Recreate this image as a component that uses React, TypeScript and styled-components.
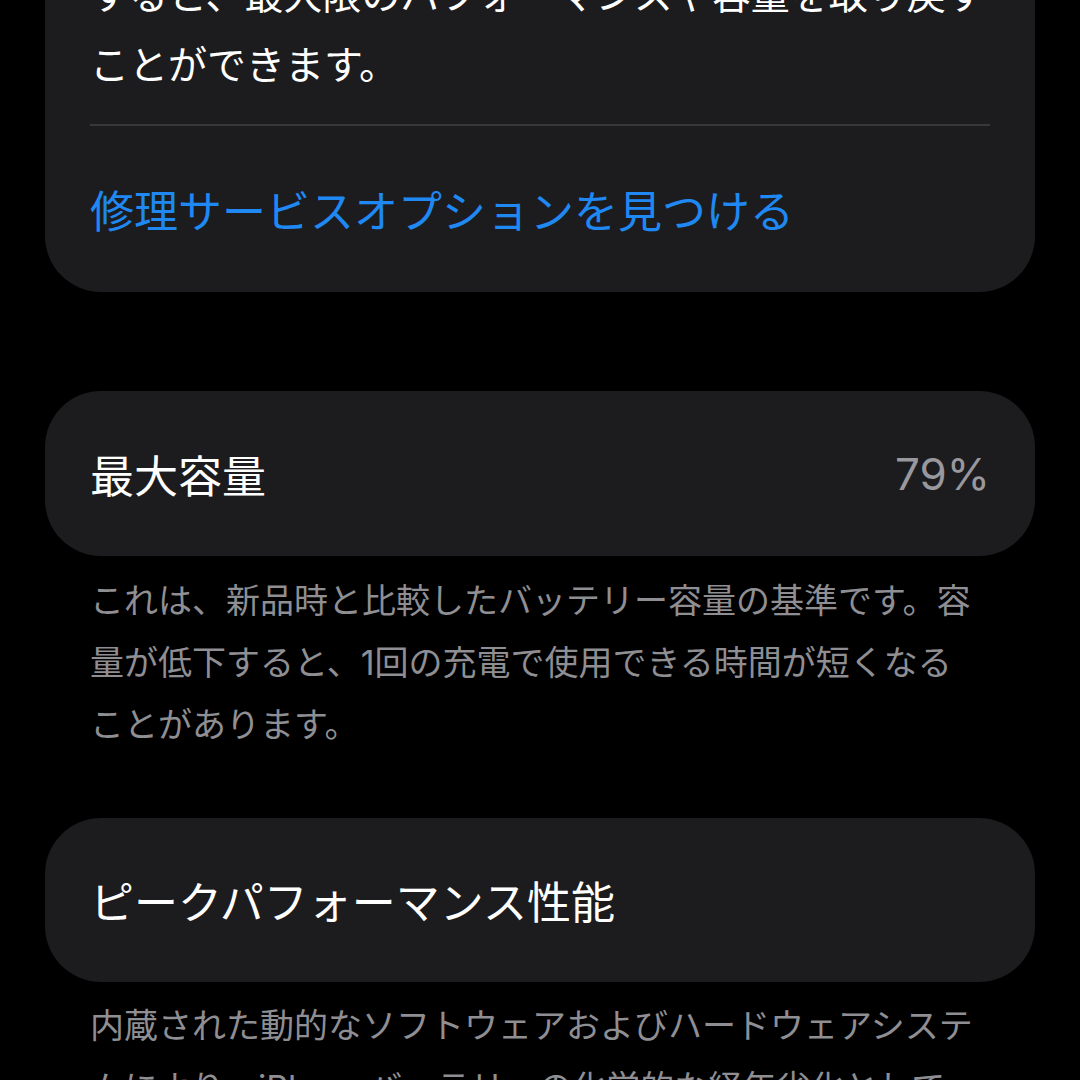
import React from "react";
import styled, { createGlobalStyle } from "styled-components";

const GlobalStyle = createGlobalStyle`
  html, body {
    margin: 0;
    padding: 0;
    background: #000;
    overflow: hidden;
  }
  body {
    font-family: "Inter", "Noto Sans CJK JP", sans-serif;
    -webkit-font-smoothing: antialiased;
  }
`;

const Screen = styled.div`
  width: 1080px;
  height: 1080px;
  overflow: hidden;
  background: #000;
`;

const Scroll = styled.div`
  display: flex;
  flex-direction: column;
  padding: 0 45px;
  margin-top: -220px;
`;

const Card = styled.section<{ $gap?: number }>`
  background: #1c1c1e;
  border-radius: 56px;
  margin-top: ${(p) => p.$gap ?? 0}px;
  overflow: hidden;
`;

const CardText = styled.div`
  padding: 40px 45px 24px;
  color: #fff;
  font-size: 39px;
  line-height: 70px;
  white-space: nowrap;
`;

const Divider = styled.div`
  height: 2px;
  margin: 0 45px;
  background: #38383a;
`;

const LinkRow = styled.div`
  height: 166px;
  display: flex;
  align-items: center;
  padding: 0 45px;
  color: #1f88f2;
  font-size: 44px;
`;

const ValueRow = styled.div<{ $height: number }>`
  height: ${(p) => p.$height}px;
  display: flex;
  align-items: center;
  justify-content: space-between;
  padding: 0 45px;
  font-size: 44px;
`;

const Label = styled.span`
  color: #fff;
`;

const Value = styled.span`
  color: #98989e;
`;

const Footer = styled.p<{ $top: number }>`
  margin: 0;
  padding: ${(p) => p.$top}px 45px 0;
  color: #8e8e93;
  font-size: 34px;
  line-height: 62px;
  white-space: nowrap;
`;

const serviceLines = [
  "お使いのiPhoneのバッテリーは著しく劣化してい",
  "ます。Apple正規サービスプロバイダでバッテリー",
  "すると、最大限のパフォーマンスや容量を取り戻す",
  "ことができます。",
];

export default function App() {
  return (
    <Screen>
      <GlobalStyle />
      <Scroll>
        <Card>
          <CardText>
            {serviceLines.map((line) => (
              <div key={line}>{line}</div>
            ))}
          </CardText>
          <Divider />
          <LinkRow>修理サービスオプションを見つける</LinkRow>
        </Card>

        <Card $gap={99}>
          <ValueRow $height={165}>
            <Label>最大容量</Label>
            <Value>79%</Value>
          </ValueRow>
        </Card>
        <Footer $top={14}>
          これは、新品時と比較したバッテリー容量の基準です。容
          <br />
          量が低下すると、1回の充電で使用できる時間が短くなる
          <br />
          ことがあります。
        </Footer>

        <Card $gap={62}>
          <ValueRow $height={164}>
            <Label>ピークパフォーマンス性能</Label>
          </ValueRow>
        </Card>
        <Footer $top={13}>
          内蔵された動的なソフトウェアおよびハードウェアシステ
          <br />
          ムにより、iPhoneバッテリーの化学的な経年劣化として
          <br />
          現れるパフォーマンスへの影響が軽減されます。
        </Footer>
      </Scroll>
    </Screen>
  );
}
